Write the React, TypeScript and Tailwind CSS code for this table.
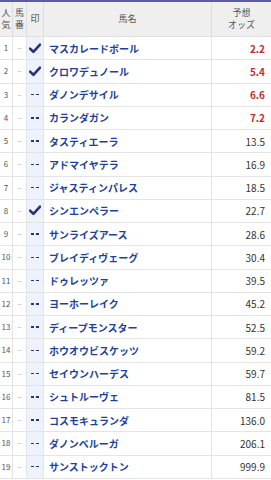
import React from 'react';

interface Horse {
    rank: number;
    name: string;
    odds: string;
    marked: boolean;
}

const horses: Horse[] = [
    { rank: 1, name: 'マスカレードボール', odds: '2.2', marked: true },
    { rank: 2, name: 'クロワデュノール', odds: '5.4', marked: true },
    { rank: 3, name: 'ダノンデサイル', odds: '6.6', marked: false },
    { rank: 4, name: 'カランダガン', odds: '7.2', marked: false },
    { rank: 5, name: 'タスティエーラ', odds: '13.5', marked: false },
    { rank: 6, name: 'アドマイヤテラ', odds: '16.9', marked: false },
    { rank: 7, name: 'ジャスティンパレス', odds: '18.5', marked: false },
    { rank: 8, name: 'シンエンペラー', odds: '22.7', marked: true },
    { rank: 9, name: 'サンライズアース', odds: '28.6', marked: false },
    { rank: 10, name: 'ブレイディヴェーグ', odds: '30.4', marked: false },
    { rank: 11, name: 'ドゥレッツァ', odds: '39.5', marked: false },
    { rank: 12, name: 'ヨーホーレイク', odds: '45.2', marked: false },
    { rank: 13, name: 'ディープモンスター', odds: '52.5', marked: false },
    { rank: 14, name: 'ホウオウビスケッツ', odds: '59.2', marked: false },
    { rank: 15, name: 'セイウンハーデス', odds: '59.7', marked: false },
    { rank: 16, name: 'シュトルーヴェ', odds: '81.5', marked: false },
    { rank: 17, name: 'コスモキュランダ', odds: '136.0', marked: false },
    { rank: 18, name: 'ダノンベルーガ', odds: '206.1', marked: false },
    { rank: 19, name: 'サンストックトン', odds: '999.9', marked: false },
];

const Check = () => (
    <svg width="12" height="11" viewBox="0 0 12 11" className="block">
        <path d="M1 5.6 L4.4 8.8 L11 1.6" fill="none" stroke="#2b2f7e" strokeWidth="2.6" strokeLinecap="round" strokeLinejoin="round" />
    </svg>
);

// "--" mark drawn as two short bars so they don't merge into one dash
const NoMark = () => (
    <div className="flex gap-[1.5px]">
        <span className="block w-[3.5px] h-[1.5px] bg-[#2b2f7e]" />
        <span className="block w-[3.5px] h-[1.5px] bg-[#2b2f7e]" />
    </div>
);

const Row: React.FC<{ horse: Horse }> = ({ horse }) => {
    const favorite = horse.rank <= 4;
    return (
        <div className="flex h-[23.25px] border-b border-[#e4e4e4]">
            <div className="w-[13px] flex items-center justify-center border-r border-[#e4e4e4] text-[8px] text-[#555]">
                {horse.rank}
            </div>
            <div className="w-[14px] flex items-center justify-center border-r border-[#e4e4e4] text-[8px] text-[#aaa]">
                –
            </div>
            <div className="w-[17px] flex items-center justify-center border-r border-[#e4e4e4] bg-[#eef2fc]">
                {horse.marked ? <Check /> : <NoMark />}
            </div>
            <div className="w-[168px] flex items-center pl-[5px] border-r border-[#e4e4e4] text-[10px] font-bold text-[#1d3f9e] whitespace-nowrap">
                {horse.name}
            </div>
            <div
                className={
                    favorite
                        ? 'flex-1 flex items-center justify-end pr-[6px] text-[10px] font-bold text-[#c8282e]'
                        : 'flex-1 flex items-center justify-end pr-[6px] text-[10px] text-[#333]'
                }
            >
                {horse.odds}
            </div>
        </div>
    );
};

export default function App() {
    return (
        <div className="w-[271px] h-[480px] overflow-hidden bg-white border-t-2 border-[#5b5ba6] font-['Noto_Sans_CJK_JP','Noto_Sans',sans-serif]">
            <div className="flex h-[35px] bg-[#efefef] border-b border-[#e0e0e0] text-[9px] leading-[12px] text-[#555]">
                <div className="w-[13px] flex flex-col items-center justify-center border-r border-[#dedede]">
                    <span>人</span>
                    <span>気</span>
                </div>
                <div className="w-[14px] flex flex-col items-center justify-center border-r border-[#dedede]">
                    <span>馬</span>
                    <span>番</span>
                </div>
                <div className="w-[17px] flex items-center justify-center border-r border-[#dedede]">印</div>
                <div className="w-[168px] flex items-center justify-center border-r border-[#dedede]">馬名</div>
                <div className="flex-1 flex flex-col items-center justify-center">
                    <span>予想</span>
                    <span>オッズ</span>
                </div>
            </div>
            {horses.map((h) => (
                <Row key={h.rank} horse={h} />
            ))}
        </div>
    );
}
